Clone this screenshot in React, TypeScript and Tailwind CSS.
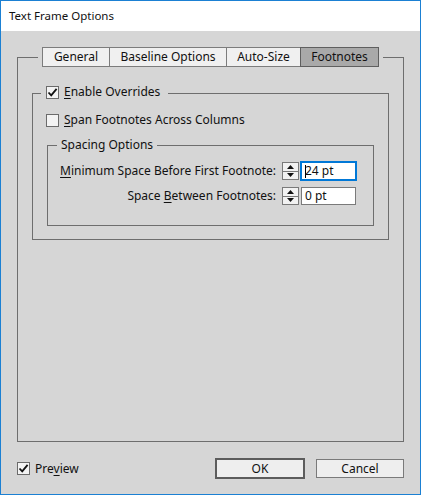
import type { ReactNode } from 'react';

// Windows-style InDesign "Text Frame Options" dialog, Footnotes tab.

function CheckBox({ checked }: { checked?: boolean }) {
  return (
    <span className="flex h-[13px] w-[13px] shrink-0 items-center justify-center border border-[#6b6b6b] bg-[#f3f3f3]">
      {checked && (
        <svg width="11" height="11" viewBox="0 0 11 11">
          <path d="M1.5 5.5 L4.2 8.3 L9.6 1.8" fill="none" stroke="#111" strokeWidth="1.8" />
        </svg>
      )}
    </span>
  );
}

function Mn({ children }: { children: ReactNode }) {
  return <span className="underline decoration-1 underline-offset-2">{children}</span>;
}

function Spinner() {
  return (
    <span className="flex h-[18px] w-[17px] shrink-0 flex-col border border-[#7a7a7a] bg-[#f2f2f2]">
      <span className="flex flex-1 items-center justify-center border-b border-[#7a7a7a]">
        <svg width="7" height="4" viewBox="0 0 7 4">
          <path d="M3.5 0 L7 4 L0 4 Z" fill="#111" />
        </svg>
      </span>
      <span className="flex flex-1 items-center justify-center">
        <svg width="7" height="4" viewBox="0 0 7 4">
          <path d="M0 0 L7 0 L3.5 4 Z" fill="#111" />
        </svg>
      </span>
    </span>
  );
}

function Field({ value, focused }: { value: string; focused?: boolean }) {
  return (
    <span
      className={
        focused
          ? 'ml-[2px] flex h-[18px] w-[55px] items-center border border-[#0078d7] bg-white pl-[3px] outline outline-1 outline-[#0078d7]'
          : 'ml-[2px] flex h-[18px] w-[55px] items-center border border-[#7a7a7a] bg-white pl-[3px]'
      }
    >
      {focused && <span className="mr-[-1px] h-[13px] w-px bg-black" />}
      {value}
    </span>
  );
}

function Tab({ label, active, className }: { label: string; active?: boolean; className: string }) {
  return (
    <div
      className={
        active
          ? `relative z-10 -ml-px flex h-[20px] items-center justify-center border border-[#5f5f5f] bg-[#a9a9a9] ${className}`
          : `flex h-[20px] items-center justify-center border border-[#7c7c7c] bg-[#f0f0f0] ${className}`
      }
    >
      {label}
    </div>
  );
}

export default function App() {
  return (
    <div
      className="flex h-[495px] w-[421px] flex-col border border-[#1b80d3] text-[12px] leading-none text-[#111]"
      style={{ fontFamily: '"Noto Sans", "Liberation Sans", sans-serif' }}
    >
      <div className="flex h-[30px] shrink-0 items-center bg-white pl-[8px] text-[11.5px]">Text Frame Options</div>

      <div className="flex flex-1 flex-col bg-[#d6d6d6] px-[16px]">
        {/* tab panel frame */}
        <div className="mt-[26px] flex h-[385px] w-[387px] flex-col border border-[#6e6e6e]">
          <div className="-mt-[11px] ml-[20px] flex w-fit bg-[#d6d6d6] px-[4px]">
            <Tab label="General" className="w-[68px]" />
            <Tab label="Baseline Options" className="-ml-px w-[118px]" />
            <Tab label="Auto-Size" className="-ml-px w-[75px]" />
            <Tab label="Footnotes" active className="w-[79px]" />
          </div>

          {/* Enable Overrides group */}
          <div className="ml-[14px] mt-[26px] flex h-[147px] w-[357px] flex-col border border-[#6e6e6e]">
            <div className="-mt-[10px] ml-[8px] flex h-[16px] w-fit items-center gap-[5px] bg-[#d6d6d6] px-[5px] pr-[8px]">
              <CheckBox checked />
              <span>
                <Mn>E</Mn>nable Overrides
              </span>
            </div>

            <div className="ml-[13px] mt-[12px] flex h-[16px] items-center gap-[5px]">
              <CheckBox />
              <span>
                <Mn>S</Mn>pan Footnotes Across Columns
              </span>
            </div>

            {/* Spacing Options group */}
            <div className="ml-[14px] mt-[17px] flex h-[81px] w-[327px] flex-col border border-[#6e6e6e]">
              <div className="-mt-[9px] ml-[9px] flex h-[16px] w-fit items-center bg-[#d6d6d6] px-[4px]">
                Spacing Options
              </div>

              <div className="mt-[9px] flex h-[18px] items-center">
                <span className="w-[228px] text-right">
                  <Mn>M</Mn>inimum Space Before First Footnote:
                </span>
                <span className="ml-[6px] flex items-center">
                  <Spinner />
                  <Field value="24 pt" focused />
                </span>
              </div>

              <div className="mt-[7px] flex h-[18px] items-center">
                <span className="w-[228px] text-right">
                  Space <Mn>B</Mn>etween Footnotes:
                </span>
                <span className="ml-[6px] flex items-center">
                  <Spinner />
                  <Field value="0 pt" />
                </span>
              </div>
            </div>
          </div>
        </div>

        {/* bottom row */}
        <div className="mt-[16px] flex h-[21px] items-center">
          <CheckBox checked />
          <span className="ml-[5px]">
            Pre<Mn>v</Mn>iew
          </span>
          <button className="ml-auto flex h-[21px] w-[90px] items-center justify-center border-2 border-[#5c5c5c] bg-[#eeeeee]">
            OK
          </button>
          <button className="ml-[11px] flex h-[19px] w-[88px] items-center justify-center border border-[#7a7a7a] bg-[#eeeeee]">
            Cancel
          </button>
        </div>
      </div>
    </div>
  );
}
